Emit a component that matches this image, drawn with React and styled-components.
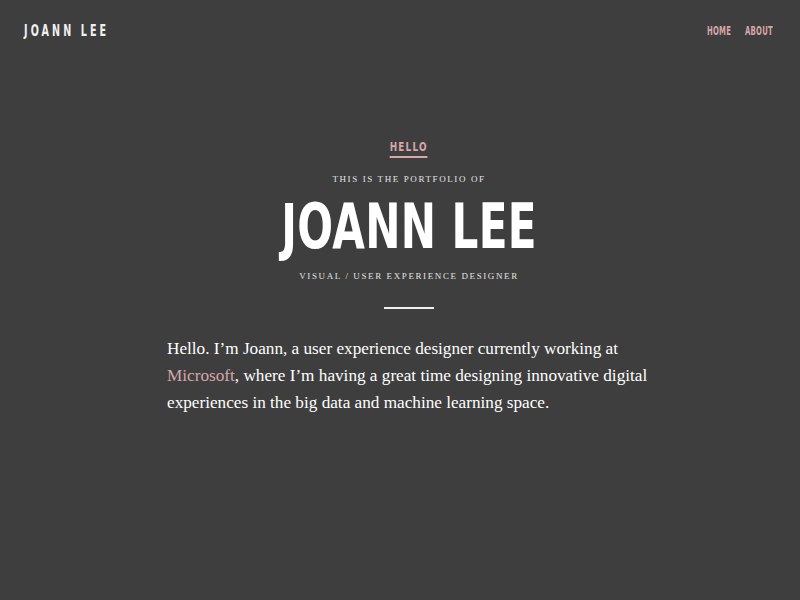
import React from "react";
import styled, { createGlobalStyle } from "styled-components";

const GlobalStyle = createGlobalStyle`
    html, body {
        margin: 0;
        background: #3e3e3e;
    }
`;

// no condensed face installed, so squeeze DejaVu Sans Bold sideways
const condensed = `
    font-family: "DejaVu Sans", sans-serif;
    font-weight: bold;
    display: inline-block;
`;

const Page = styled.div`
    min-height: 600px;
    background: #3e3e3e;
    color: #ffffff;
`;

const Header = styled.header`
    display: flex;
    justify-content: space-between;
    align-items: center;
    padding: 22px 27px 0 24px;
    height: 18px;
`;

const Logo = styled.div`
    ${condensed}
    font-size: 15px;
    letter-spacing: 4.8px;
    color: #f0f0f0;
    transform: scaleX(0.64);
    transform-origin: left center;
`;

const Nav = styled.nav`
    display: flex;
    gap: 23px;
    transform: scaleX(0.6);
    transform-origin: right center;
`;

const NavLink = styled.a`
    ${condensed}
    font-size: 11.5px;
    letter-spacing: 0.4px;
    color: #d6a6a9;
    text-decoration: none;
`;

const Hero = styled.section`
    display: flex;
    flex-direction: column;
    align-items: center;
    padding: 100px 0 0 18px;
`;

const Hello = styled.div`
    ${condensed}
    font-size: 12px;
    letter-spacing: 1.6px;
    color: #d6a6a9;
    padding-bottom: 2px;
    border-bottom: 2px solid #d6a6a9;
    transform: scaleX(0.74);
`;

const Eyebrow = styled.div`
    margin-top: 16px;
    font-family: "Liberation Serif", serif;
    font-size: 9px;
    letter-spacing: 1.6px;
    color: #e4e4e4;
    text-transform: uppercase;
`;

const Name = styled.h1`
    ${condensed}
    margin: 8px 0 0;
    font-size: 62px;
    line-height: 70px;
    letter-spacing: 0.5px;
    color: #ffffff;
    transform: scaleX(0.68);
`;

const Role = styled(Eyebrow)`
    margin-top: 9px;
`;

const Rule = styled.div`
    width: 50px;
    height: 2px;
    background: #f0f0f0;
    margin-top: 26px;
`;

const Intro = styled.p`
    width: 492px;
    margin: 26px 0 0 8px;
    font-family: "Liberation Serif", serif;
    font-size: 17.2px;
    line-height: 27px;
    color: #ffffff;
`;

const Pink = styled.a`
    color: #d6a6a9;
    text-decoration: none;
`;

export default function App() {
    return (
        <Page>
            <GlobalStyle />
            <Header>
                <Logo>JOANN LEE</Logo>
                <Nav>
                    <NavLink href="#">HOME</NavLink>
                    <NavLink href="#">ABOUT</NavLink>
                </Nav>
            </Header>
            <Hero>
                <Hello>HELLO</Hello>
                <Eyebrow>This is the portfolio of</Eyebrow>
                <Name>JOANN LEE</Name>
                <Role>Visual / User Experience Designer</Role>
                <Rule />
                <Intro>
                    Hello. I’m Joann, a user experience designer currently working at{" "}
                    <Pink href="#">Microsoft</Pink>, where I’m having a great time designing
                    innovative digital experiences in the big data and machine learning space.
                </Intro>
            </Hero>
        </Page>
    );
}
